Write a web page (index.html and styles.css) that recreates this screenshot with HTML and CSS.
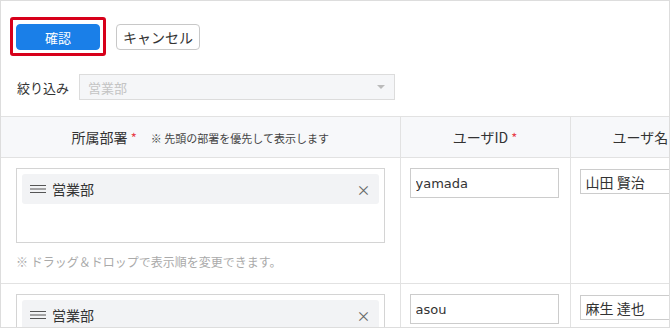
FILE: index.html
```html
<!DOCTYPE html>
<html lang="ja">
<head>
    <meta charset="UTF-8">
    <meta name="viewport" content="width=device-width, initial-scale=1.0">
    <title>所属部署の編集</title>
    <link rel="stylesheet" href="styles.css">
</head>
<body>
    <div class="frame">
        <div class="toolbar">
            <span class="highlight"><button class="btn btn-primary">確認</button></span>
            <button class="btn btn-default">キャンセル</button>
        </div>

        <div class="filter">
            <label class="filter-label">絞り込み</label>
            <div class="select">
                <span class="placeholder">営業部</span>
                <span class="caret"></span>
            </div>
        </div>

        <table class="grid">
            <thead>
                <tr>
                    <th class="col-dept">所属部署 <span class="req">*</span><span class="th-note">※ 先頭の部署を優先して表示します</span></th>
                    <th class="col-id">ユーザID <span class="req">*</span></th>
                    <th class="col-name">ユーザ名 <span class="req">*</span></th>
                </tr>
            </thead>
            <tbody>
                <tr>
                    <td class="col-dept">
                        <div class="sortable">
                            <div class="sort-item">
                                <span class="handle"><svg width="16" height="8" viewBox="0 0 16 8"><path d="M0 0.5H16M0 4H16M0 7.5H16" stroke="#555" stroke-width="1.2"/></svg></span>
                                <span class="item-text">営業部</span>
                                <span class="remove">×</span>
                            </div>
                        </div>
                        <p class="hint">※ ドラッグ＆ドロップで表示順を変更できます。</p>
                    </td>
                    <td class="col-id"><input class="text-input" type="text" value="yamada"></td>
                    <td class="col-name"><input class="text-input name-input" type="text" value="山田 賢治"></td>
                </tr>
                <tr>
                    <td class="col-dept">
                        <div class="sortable">
                            <div class="sort-item">
                                <span class="handle"><svg width="16" height="8" viewBox="0 0 16 8"><path d="M0 0.5H16M0 4H16M0 7.5H16" stroke="#555" stroke-width="1.2"/></svg></span>
                                <span class="item-text">営業部</span>
                                <span class="remove">×</span>
                            </div>
                        </div>
                        <p class="hint">※ ドラッグ＆ドロップで表示順を変更できます。</p>
                    </td>
                    <td class="col-id"><input class="text-input" type="text" value="asou"></td>
                    <td class="col-name"><input class="text-input name-input" type="text" value="麻生 達也"></td>
                </tr>
            </tbody>
        </table>
    </div>
</body>
</html>
```

FILE: styles.css
```css
* { box-sizing: border-box; }
body {
    margin: 0;
    font-family: "Noto Sans CJK JP", "Noto Sans", sans-serif;
    color: #333;
    background: #fff;
}
.frame {
    width: 670px;
    height: 328px;
    border: 1px solid #ddd;
    overflow: hidden;
}
.toolbar {
    display: flex;
    align-items: center;
    gap: 10px;
    padding: 16px 0 0 9px;
}
.highlight {
    display: inline-flex;
    border: 3px solid #d7001a;
    border-radius: 3px;
    padding: 4px 3px 3px;
}
.btn {
    height: 26px;
    border-radius: 4px;
    font-family: inherit;
    font-size: 13px;
    cursor: pointer;
    padding: 0;
}
.btn-primary {
    width: 84px;
    background: #1a7fe8;
    border: 1px solid #1a7fe8;
    color: #fff;
}
.btn-default {
    width: 84px;
    background: #fff;
    border: 1px solid #c8c8c8;
    color: #333;
    font-size: 14px;
}
.filter {
    display: flex;
    align-items: center;
    gap: 10px;
    margin-top: 18px;
    padding-left: 16px;
}
.filter-label { font-size: 13px; }
.select {
    width: 316px;
    height: 26px;
    display: flex;
    align-items: center;
    justify-content: space-between;
    padding: 0 9px 0 8px;
    background: #f5f6f8;
    border: 1px solid #dcdcdc;
}
.placeholder { font-size: 13px; color: #c4c4c4; }
.caret {
    width: 0;
    height: 0;
    border-left: 4px solid transparent;
    border-right: 4px solid transparent;
    border-top: 4px solid #bbb;
}
.grid {
    margin-top: 16px;
    border-collapse: collapse;
    table-layout: fixed;
    width: 719px;
}
.grid th, .grid td {
    border: 1px solid #e2e2e2;
    vertical-align: top;
}
.grid tr > :first-child { border-left: none; }
.grid th {
    height: 41px;
    background: #f7f8fa;
    font-weight: normal;
    font-size: 14px;
    vertical-align: middle;
    text-align: center;
}
.col-dept { width: 399px; }
.col-id { width: 170px; }
.col-name { width: 150px; }
.req { color: #e8404a; font-size: 13px; }
.th-note { font-size: 11px; margin-left: 14px; color: #444; }
.grid td { padding: 10px 9px; }
.grid td.col-dept { padding: 10px 15px 12px 15px; }
.sortable {
    height: 75px;
    border: 1px solid #d4d4d4;
    padding: 5px;
}
.sort-item {
    height: 30px;
    display: flex;
    align-items: center;
    background: #f2f3f5;
    border-radius: 3px;
    padding: 0 8px 0 8px;
    font-size: 14px;
}
.handle { display: flex; margin-right: 6px; }
.item-text { flex: 1; }
.remove { font-size: 14px; color: #666; }
.hint {
    margin: 10px 0 0;
    font-size: 12px;
    line-height: 18px;
    color: #aaa;
}
.text-input {
    width: 149px;
    height: 30px;
    border: 1px solid #ccc;
    padding: 0 5px;
    font-family: "DejaVu Sans", "Noto Sans CJK JP", sans-serif;
    font-size: 13px;
    color: #333;
}
.name-input {
    width: 160px;
    height: 25px;
    margin-top: 1px;
    font-family: "Noto Sans CJK JP", sans-serif;
    font-size: 14px;
    padding-top: 0;
}
```
